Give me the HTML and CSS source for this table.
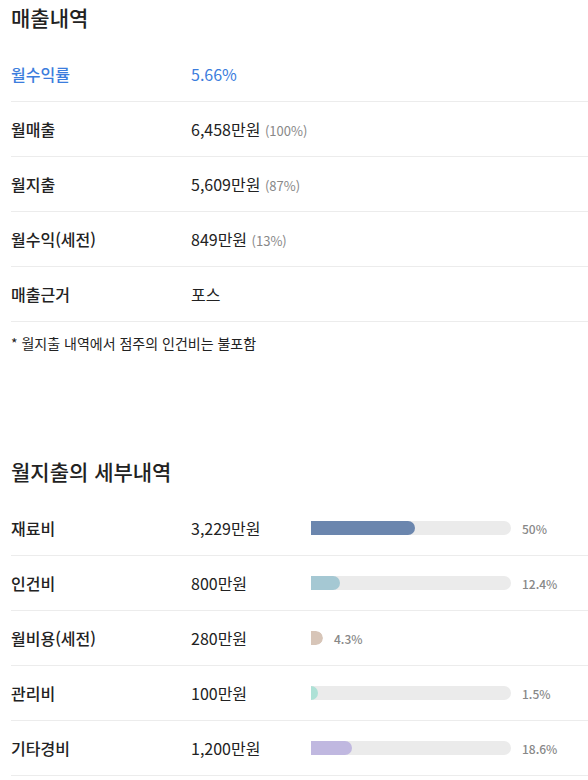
FILE: index.html
```html
<!DOCTYPE html>
<html lang="ko">
<head>
<meta charset="utf-8">
<link rel="stylesheet" href="styles.css">
</head>
<body>
<section class="sales">
  <h2 class="title">매출내역</h2>
  <ul class="rows">
    <li class="row highlight"><span class="label">월수익률</span><span class="value">5.66%</span></li>
    <li class="row"><span class="label">월매출</span><span class="value">6,458만원 <small class="pct">(100%)</small></span></li>
    <li class="row"><span class="label">월지출</span><span class="value">5,609만원 <small class="pct">(87%)</small></span></li>
    <li class="row"><span class="label">월수익(세전)</span><span class="value">849만원 <small class="pct">(13%)</small></span></li>
    <li class="row"><span class="label">매출근거</span><span class="value">포스</span></li>
  </ul>
  <p class="note">* 월지출 내역에서 점주의 인건비는 불포함</p>
</section>

<section class="expenses">
  <h2 class="title">월지출의 세부내역</h2>
  <ul class="rows">
    <li class="row"><span class="label">재료비</span><span class="value">3,229만원</span>
      <span class="chart"><span class="track"><span class="fill c1" style="width:104px"></span></span><span class="chart-pct">50%</span></span></li>
    <li class="row"><span class="label">인건비</span><span class="value">800만원</span>
      <span class="chart"><span class="track"><span class="fill c2" style="width:29px"></span></span><span class="chart-pct">12.4%</span></span></li>
    <li class="row"><span class="label">월비용(세전)</span><span class="value">280만원</span>
      <span class="chart"><span class="track bare"><span class="fill c3" style="width:12px"></span></span><span class="chart-pct">4.3%</span></span></li>
    <li class="row"><span class="label">관리비</span><span class="value">100만원</span>
      <span class="chart"><span class="track"><span class="fill c4" style="width:7px"></span></span><span class="chart-pct">1.5%</span></span></li>
    <li class="row"><span class="label">기타경비</span><span class="value">1,200만원</span>
      <span class="chart"><span class="track"><span class="fill c5" style="width:41px"></span></span><span class="chart-pct">18.6%</span></span></li>
  </ul>
</section>
</body>
</html>
```

FILE: styles.css
```css
* { box-sizing: border-box; }
html, body { margin: 0; padding: 0; background: #fff; }
body {
  font-family: "Noto Sans CJK KR", "Noto Sans", sans-serif;
  color: #222;
  padding-left: 11px;
  width: 588px;
}
.title {
  margin: 0;
  font-size: 21px;
  font-weight: 500;
  line-height: 34px;
  padding-bottom: 13px;
  color: #222;
}
.rows { list-style: none; margin: 0; padding: 0; }
.row {
  display: flex;
  align-items: center;
  height: 55px;
  border-bottom: 1px solid #ececec;
  font-size: 16px;
}
.label {
  width: 180px;
  font-weight: 500;
}
.value { width: 120px; font-weight: 400; }
.highlight .label, .highlight .value { color: #3b7ddd; }
.pct { font-size: 13px; color: #888; }
.note {
  margin: 11px 0 0;
  font-size: 14px;
  line-height: 20px;
  color: #222;
}
.expenses { margin-top: 101px; }
.chart { display: flex; align-items: center; }
.track {
  display: block;
  width: 200px;
  height: 14px;
  background: #ebebeb;
  border-radius: 0 7px 7px 0;
  overflow: hidden;
}
.track.bare { width: auto; background: transparent; }
.fill { display: block; height: 100%; border-radius: 0 7px 7px 0; }
.c1 { background: #6b86ae; }
.c2 { background: #a5c8d3; }
.c3 { background: #d7c5b8; }
.c4 { background: #aee1d6; }
.c5 { background: #c0b8e0; }
.chart-pct {
  margin-left: 11px;
  font-size: 12px;
  font-weight: 500;
  color: #888;
}
```
